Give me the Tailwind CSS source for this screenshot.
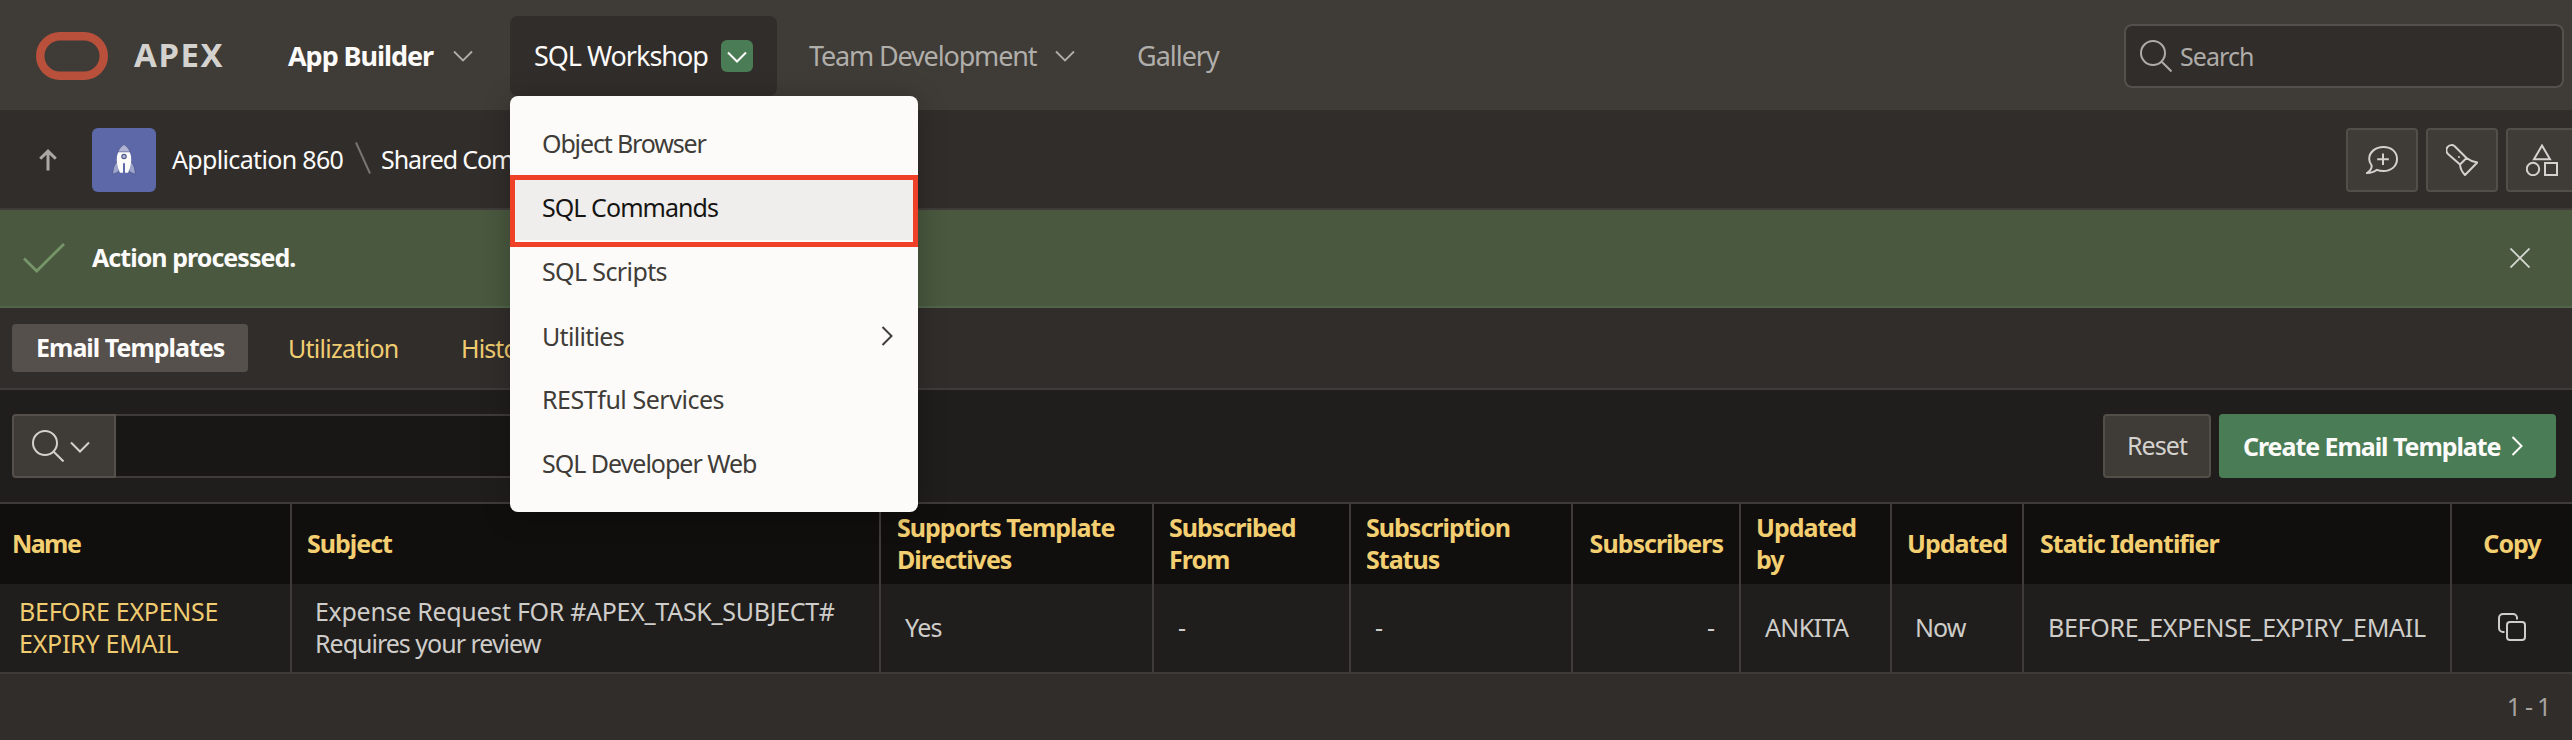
<!DOCTYPE html>
<html lang="en">
<head>
<meta charset="utf-8">
<title>Email Templates</title>
<script src="https://cdn.jsdelivr.net/npm/@tailwindcss/browser@4"></script>
</head>
<body class="relative flex h-[740px] w-[2572px] flex-col overflow-hidden bg-[#312d2a] font-['Noto_Sans',sans-serif] text-[25px] leading-8 whitespace-nowrap text-[#fcfbfa]">

<!-- Main navigation -->
<header class="flex h-[110px] shrink-0 items-start bg-[#3f3b36] pt-4 pr-2 text-[27px]">
  <div class="flex h-20 w-[246px] items-center pl-9">
    <svg class="h-12 w-[72px] shrink-0" viewBox="0 0 72 48" fill="none" stroke="#b9503c" stroke-width="8.5"><rect x="4.25" y="4.25" width="63.5" height="39.5" rx="19.75"/></svg>
    <span class="-mt-0.5 ml-[26px] text-[33px] font-bold tracking-[1.600px] text-[#d4d2cf]">APEX</span>
  </div>
  <a class="flex h-20 w-[264px] items-center pl-[42px] font-bold"><span class="w-[148px] tracking-[-1.06px]">App Builder</span>
    <svg class="ml-[17px] h-3 w-5" viewBox="0 0 20 12" fill="none" stroke="#b0aeaa" stroke-width="1.8"><path d="M1 1.5 10 10.5 19 1.5"/></svg></a>
  <a class="flex h-20 w-[267px] items-center rounded-lg bg-[#312d2a] pl-6"><span class="w-[187px] tracking-[-1.02px]">SQL Workshop</span>
    <span class="flex size-8 items-center justify-center rounded-md bg-[#4a7d56]"><svg class="mt-0.5 h-3 w-5" viewBox="0 0 20 12" fill="none" stroke="#fcfbfa" stroke-width="2"><path d="M1 1.5 10 10.5 19 1.5"/></svg></span></a>
  <a class="flex h-20 w-[328px] items-center pl-8 text-[#b0aeaa]"><span class="w-[229px] tracking-[-1.16px]">Team Development</span>
    <svg class="ml-[17px] h-3 w-5" viewBox="0 0 20 12" fill="none" stroke="#b0aeaa" stroke-width="1.8"><path d="M1 1.5 10 10.5 19 1.5"/></svg></a>
  <a class="flex h-20 items-center pl-8 tracking-[-1.02px] text-[#b0aeaa]">Gallery</a>
  <label class="mt-2 ml-auto flex h-16 w-[440px] items-center rounded-lg border-2 border-[#55504b] bg-[#312d2a] pl-[14px] text-[25px] text-[#aeaca8]">
    <svg class="h-8 w-8" viewBox="0 0 32 32" fill="none" stroke="currentColor" stroke-width="2"><circle cx="13" cy="13" r="12"/><path d="M21.5 21.5 31.500 31.500"/></svg>
    <span class="ml-2 tracking-[-0.94px]">Search</span>
  </label>
</header>

<!-- Breadcrumb bar -->
<div class="flex h-[100px] shrink-0 items-center border-b-2 border-[#3f3b38] pt-0.5 pl-[39px]">
  <svg class="h-[22px] w-[18px]" viewBox="0 0 18 22" fill="none" stroke="#aaa8a4" stroke-width="3"><path d="M9 21.500V3M1.200 9.800 9 2.200l7.800 7.600"/></svg>
  <div class="ml-[35px] flex size-16 items-center justify-center rounded-md bg-[#5d68a8]">
    <svg class="h-8 w-6" viewBox="0 0 24 32">
      <path d="M5.500 17.500C2.500 20 .8 24 .8 30.500L7 27.500zM18.500 17.500C21.500 20 23.200 24 23.200 30.500L17 27.500z" fill="#9ea4cb" stroke="#4a5386" stroke-width=".7"/>
      <path d="M12 .8C8.800 3.200 6 7 5 12c-.8 6 .4 12 3 16.800h8c2.600-4.800 3.800-10.800 3-16.800C18 7 15.200 3.200 12 .8z" fill="#fcfbfa"/>
      <path d="M12 .5C9 2.500 7 5 5.900 7.800h12.200C17 5 15 2.500 12 .5z" fill="#aeb3d4" stroke="#4a5386" stroke-width=".7"/>
      <circle cx="12" cy="12.500" r="2.200" fill="#aeb3d4" stroke="#4a5386" stroke-width="1.100"/>
      <path d="M11 19.500q1-1.500 2 0V30q-1 2-2 0z" fill="#5d68a8"/>
    </svg>
  </div>
  <span class="-mt-0.5 ml-4 w-[173px] tracking-[-0.66px]">Application 860</span>
  <svg class="mx-2.5 -mt-1 h-8 w-4" viewBox="0 0 16 32" fill="none" stroke="#78746f" stroke-width="2"><path d="M1 .5 15 31.500"/></svg>
  <span class="-mt-0.5 tracking-[-1.1px]">Shared Components</span>
  <div class="-mr-9 ml-auto flex gap-2 text-[#d4d2cf]">
    <span class="flex h-16 w-[72px] items-center justify-center rounded border-2 border-[#524e48] bg-[#3f3b36]">
      <svg class="size-8" viewBox="0 0 32 32" fill="none" stroke="currentColor" stroke-width="2"><path d="M17.500 3C25.500 3 31 8 31 15s-5.500 12-13.500 12c-2.600 0-4.700-.4-6.500-1.200-2.300 1.800-5.300 3.200-10 3.200 3.500-2.300 5-4.800 4.600-7.500C4.200 19.500 3.200 17.500 3.200 15 3.200 8 9.500 3 17.500 3zM17 9.500v11.500M11.200 15.200h11.600"/></svg></span>
    <span class="flex h-16 w-[72px] items-center justify-center rounded border-2 border-[#524e48] bg-[#3f3b36]">
      <svg class="size-8" viewBox="0 0 32 32" fill="none" stroke="currentColor" stroke-width="2" stroke-linejoin="round"><path d="M2.300 10.300A4.600 4.600 0 0 1 8.700 2.200L20.500 14 14 20.500zM20.500 14Q25 17.500 31.300 18.500L19 31Q14.500 26.500 14 20.500"/><circle cx="13" cy="13" r="1" fill="currentColor" stroke="none"/></svg></span>
    <span class="flex h-16 w-[72px] items-center justify-center rounded border-2 border-[#524e48] bg-[#3f3b36]">
      <svg class="size-8" viewBox="0 0 32 32" fill="none" stroke="currentColor" stroke-width="2"><path d="M16 1.500 24 15.200H8zM19 19h12v12H19z"/><circle cx="7" cy="25" r="6.200"/></svg></span>
    <span class="w-[22px]"></span>
  </div>
</div>

<!-- Success message -->
<div class="flex h-[98px] shrink-0 items-center border-b-2 border-[#51644a] bg-[#49583f] pl-[23px]">
  <svg class="h-[30px] w-[42px]" viewBox="0 0 42 30" fill="none" stroke="#76966a" stroke-width="2.800"><path d="M1 15.500 13.700 28 41 1"/></svg>
  <span class="-mt-0.5 ml-[27px] font-bold tracking-[-0.96px]">Action processed.</span>
  <svg class="mr-[42px] ml-auto size-5" viewBox="0 0 20 20" stroke="#d4d8d0" stroke-width="1.800"><path d="M.5.5 19.500 19.500M19.500.5.5 19.500"/></svg>
</div>

<!-- Tabs -->
<nav class="flex h-[82px] shrink-0 items-center border-b-2 border-[#3f3b38] pl-3 text-[#f0cc71]">
  <a class="h-12 w-[236px] rounded bg-[#55504b] pl-6 leading-[47px] font-bold tracking-[-1px] text-[#fcfbfa]">Email Templates</a>
  <a class="-mt-px w-[174px] pl-10 tracking-[-0.72px]">Utilization</a>
  <a class="-mt-px pl-[39px] tracking-[-0.9px]">History</a>
</nav>

<!-- Report toolbar -->
<div class="flex h-28 shrink-0 items-center bg-[#201e1c] px-3 pr-4">
  <span class="flex h-16 w-[104px] items-center rounded-l border-2 border-[#55504b] bg-[#3f3b36] pl-[18px] text-[#d4d2cf]">
    <svg class="size-8" viewBox="0 0 32 32" fill="none" stroke="currentColor" stroke-width="2"><circle cx="13" cy="13" r="12"/><path d="M21.500 21.500 31.500 31.500"/></svg>
    <svg class="mt-0.5 ml-[6px] h-3 w-5" viewBox="0 0 20 12" fill="none" stroke="currentColor" stroke-width="2"><path d="M1 1.500 10 10.500 19 1.500"/></svg>
  </span>
  <span class="h-16 w-[700px] rounded-r border-2 border-l-0 border-[#3f3b38] bg-[#191715]"></span>
  <span class="ml-auto h-16 w-[108px] rounded border-2 border-[#524e48] bg-[#3f3b36] pl-[22px] leading-[59px] tracking-[-0.93px] text-[#d4d2cf]">Reset</span>
  <span class="ml-2 flex h-16 w-[337px] items-center rounded bg-[#4a7d56] pl-6 font-bold"><span class="-mt-px w-[257px] tracking-[-1.06px]">Create Email Template</span>
    <svg class="ml-[11px] h-5 w-3" viewBox="0 0 12 20" fill="none" stroke="#fcfbfa" stroke-width="2"><path d="M1.500 1 10.500 10 1.500 19"/></svg></span>
</div>

<!-- Report -->
<table class="w-[2572px] shrink-0 table-fixed border-separate border-spacing-0 border-y-2 border-[#3f3b38]">
  <colgroup><col class="w-[292px]"><col class="w-[589px]"><col class="w-[273px]"><col class="w-[197px]"><col class="w-[222px]"><col class="w-[168px]"><col class="w-[151px]"><col class="w-[132px]"><col class="w-[428px]"><col class="w-[120px]"></colgroup>
  <thead>
    <tr class="h-20 bg-[#110f0d] text-left text-[#f3cf72] *:border-r-2 *:border-[#3f3b38] *:px-[15px] *:pb-0.5 *:font-bold *:tracking-[-1px]">
      <th class="!pl-3 !tracking-[-1.600px]">Name</th>
      <th>Subject</th>
      <th class="!pl-4">Supports Template<br>Directives</th>
      <th>Subscribed<br>From</th>
      <th>Subscription<br>Status</th>
      <th class="!pr-4 text-right">Subscribers</th>
      <th>Updated<br>by</th>
      <th>Updated</th>
      <th class="!pl-4">Static Identifier</th>
      <th class="!border-r-0 text-center">Copy</th>
    </tr>
  </thead>
  <tbody>
    <tr class="h-[88px] bg-[#201e1c] text-[#cfcdca] *:border-r-2 *:border-[#3f3b38] *:px-[23px] *:pb-0.5">
      <td class="!pl-[19px] tracking-[-0.26px] text-[#f0cc71]">BEFORE EXPENSE<br>EXPIRY EMAIL</td>
      <td><span class="tracking-[-0.3px]">Expense Request FOR #APEX_TASK_SUBJECT#</span><br><span class="tracking-[-1px]">Requires your review</span></td>
      <td class="!pl-6 tracking-[-0.7px]">Yes</td>
      <td class="!pl-6">-</td>
      <td class="!pl-6">-</td>
      <td class="!pr-6 text-right">-</td>
      <td class="!pl-6 tracking-[-0.62px]">ANKITA</td>
      <td class="tracking-[-0.9px]">Now</td>
      <td class="!pl-6 tracking-[-0.29px]">BEFORE_EXPENSE_EXPIRY_EMAIL</td>
      <td class="!border-r-0 !px-0"><svg class="mx-auto h-7 w-7" viewBox="0 0 28 28" fill="none" stroke="currentColor" stroke-width="2"><rect x="9" y="9" width="18" height="18" rx="3"/><path d="M6.500 19H5a4 4 0 0 1-4-4V5a4 4 0 0 1 4-4h10a4 4 0 0 1 4 4v1.500"/></svg></td>
    </tr>
  </tbody>
</table>
<footer class="flex h-[66px] items-center justify-end pr-[22px] pb-0.5 tracking-[-1.300px] text-[#a5a29e]">1 - 1</footer>

<!-- SQL Workshop menu -->
<div class="absolute top-24 left-[510px] w-[408px] rounded-lg bg-[#fcfbf9] py-4 leading-[63px] text-[#403c38] shadow-[0_4px_28px_rgba(0,0,0,0.25)]">
  <div class="h-16 pl-8 tracking-[-1.14px]">Object Browser</div>
  <div class="h-16 bg-[#f0eeec] pl-8 tracking-[-0.94px] text-[#161513]">SQL Commands</div>
  <div class="h-16 pl-8 tracking-[-0.62px]">SQL Scripts</div>
  <div class="flex h-16 items-center justify-between pr-[25px] pl-8 tracking-[-0.7px]">Utilities
    <svg class="h-5 w-3" viewBox="0 0 12 20" fill="none" stroke="#403c38" stroke-width="2"><path d="M1.500 1 10.500 10 1.500 19"/></svg></div>
  <div class="h-16 pl-8 tracking-[-0.46px]">RESTful Services</div>
  <div class="h-16 pl-8 tracking-[-1.01px]">SQL Developer Web</div>
  <div class="absolute inset-x-0 top-[79px] h-[72px] border-5 border-[#ee4128]"></div>
</div>
</body>
</html>
